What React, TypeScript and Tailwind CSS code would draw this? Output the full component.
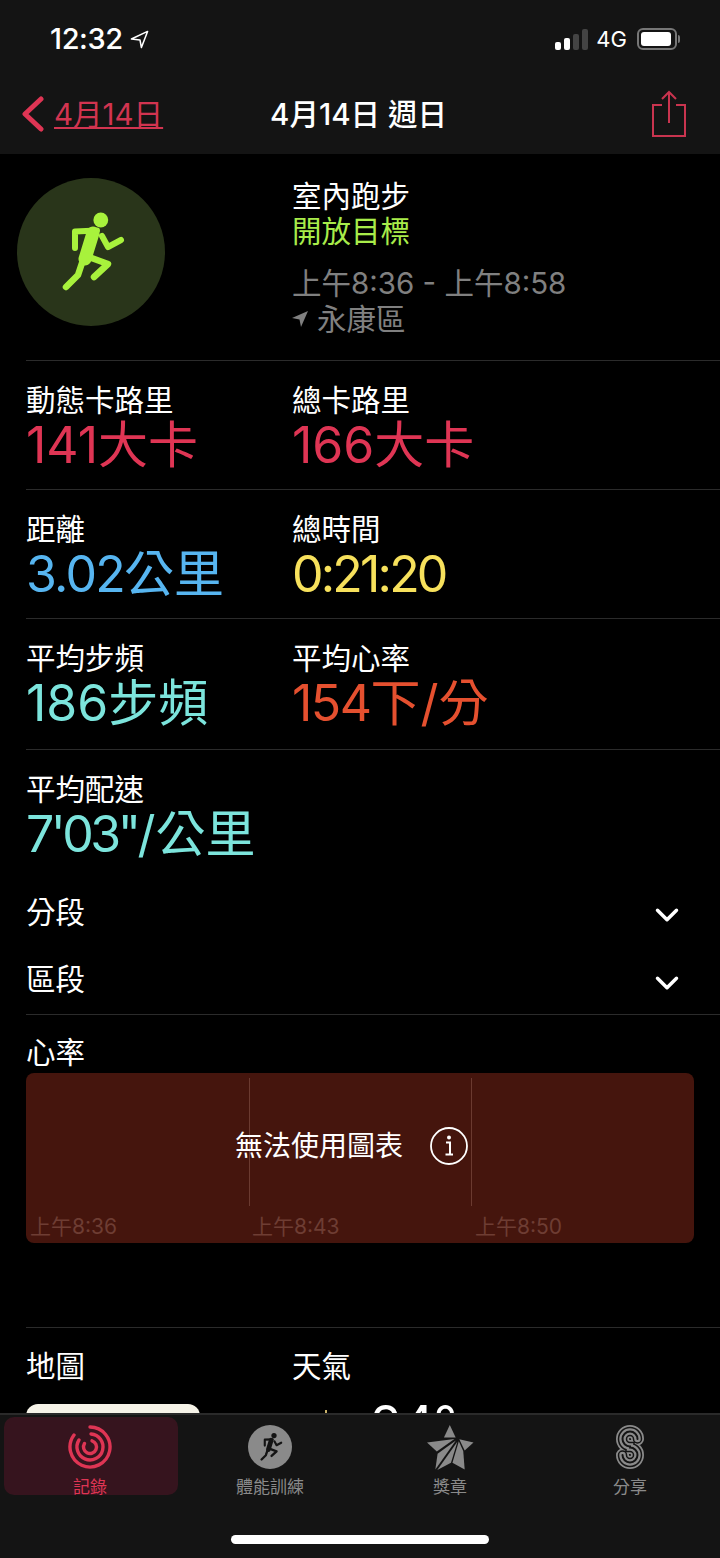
import { ChevronDown } from "lucide-react";

const FONT = "font-['Inter','Noto_Sans_CJK_TC',sans-serif]";

function Runner({ className, color }: { className?: string; color: string }) {
  return (
    <svg viewBox="58 208 68 84" className={className} fill="none">
      <circle cx="101.8" cy="218" r="7.4" fill={color} />
      <path
        d="M76 246 L76 229.5 L98 228.5 M103 234 L109 245 L122 238"
        stroke={color}
        strokeWidth="6"
        strokeLinecap="round"
        strokeLinejoin="round"
      />
      <path d="M94 231 L86 257" stroke={color} strokeWidth="13" strokeLinecap="round" />
      <path
        d="M84 258 L79 273 L67 285 M87 254 L109 262 L95 275"
        stroke={color}
        strokeWidth="6.5"
        strokeLinecap="round"
        strokeLinejoin="round"
      />
    </svg>
  );
}

function Metric({
  label,
  num,
  unit,
  color,
  track = "",
}: {
  label: string;
  num: string;
  unit?: string;
  color: string;
  track?: string;
}) {
  return (
    <div>
      <div className="text-[29.5px] leading-[34px] text-white">{label}</div>
      <div className={`mt-[3px] text-[50px] leading-[50px] ${color}`}>
        <span className={track}>{num}</span>
        {unit}
      </div>
    </div>
  );
}

function MetricRow({ height, children }: { height: string; children: React.ReactNode }) {
  return (
    <div className={`grid grid-cols-[266px_1fr] border-b border-[#2b2b2b] pt-[22px] ${height}`}>
      {children}
    </div>
  );
}

function TabLabel({ children, active }: { children: string; active?: boolean }) {
  return (
    <span className={`mt-[7px] shrink-0 text-[17px] leading-[22px] ${active ? "text-[#df3554]" : "text-[#8a8a8a]"}`}>
      {children}
    </span>
  );
}

const S_PATH = "M21.5 14 A7.5 7.5 0 1 0 14 21.5 L14 22.5 A7.5 7.5 0 1 1 6.5 30";

export default function App() {
  return (
    <div className={`relative h-[1558px] w-[720px] overflow-hidden bg-black ${FONT}`}>
      {/* status bar + nav */}
      <header className="h-[154px] bg-[#141414] text-white">
        <div className="flex h-[78px] items-start justify-between pt-[23px] pl-[50px] pr-[40px]">
          <div className="flex items-center gap-[7px]">
            <span className="text-[29px] leading-[32px] font-medium tracking-[-0.4px]">12:32</span>
            <svg viewBox="0 0 20 20" className="h-[19px] w-[19px]" fill="none" stroke="white" strokeWidth="1.6" strokeLinejoin="round">
              <path d="M1.5 9.5 L18.5 1.5 L12 18.5 L10.5 10.5 Z" />
            </svg>
          </div>
          <div className="flex items-center pt-[2px]">
            <div className="flex h-[22px] items-end gap-[3px]">
              <div className="h-[8px] w-[6px] rounded-[2px] bg-white" />
              <div className="h-[12px] w-[6px] rounded-[2px] bg-white" />
              <div className="h-[16px] w-[6px] rounded-[2px] bg-[#444]" />
              <div className="h-[21px] w-[6px] rounded-[2px] bg-[#444]" />
            </div>
            <span className="ml-[8px] text-[22px] leading-[28px]">4G</span>
            <div className="ml-[10px] flex h-[22px] w-[40px] items-center rounded-[6px] border-2 border-[#777] p-[2px]">
              <div className="h-full w-[30px] rounded-[3px] bg-white" />
            </div>
            <div className="ml-px h-[8px] w-[2px] rounded-r-sm bg-[#777]" />
          </div>
        </div>
        <div className="grid h-[76px] grid-cols-[1fr_auto_1fr] items-center pb-[4px] pl-[22px] pr-[34px]">
          <div className="flex items-center">
            <svg viewBox="0 0 22 36" className="h-[36px] w-[22px]" fill="none" stroke="#df3554" strokeWidth="5" strokeLinecap="round" strokeLinejoin="round">
              <path d="M19 3 L3 18 L19 33" />
            </svg>
            <span className="ml-[10px] text-[29.5px] leading-[34px] text-[#d23450] underline decoration-2 underline-offset-2">
              4月14日
            </span>
          </div>
          <div className="ml-[9px] text-[29.5px] leading-[34px] font-medium">4月14日 週日</div>
          <svg viewBox="0 0 34 48" className="h-[48px] w-[34px] justify-self-end" fill="none" stroke="#c9344f" strokeWidth="2">
            <path d="M10 15 H1 V46 H33 V15 H24" />
            <path d="M17 33 V2 M10 9 L17 2 L24 9" />
          </svg>
        </div>
      </header>

      <main className="pl-[26px]">
        {/* workout summary */}
        <div className="relative -ml-[26px] grid h-[207px] grid-cols-[266px_1fr] pl-[26px]">
          <div className="-ml-[9px] pt-[24px]">
            <div className="flex h-[148px] w-[148px] items-center justify-center rounded-full bg-[#29351a]">
              <Runner className="h-[84px] w-[68px]" color="#a8f23c" />
            </div>
          </div>
          <div className="pt-[24px] text-[29.5px]">
            <div className="leading-[36px] text-white">室內跑步</div>
            <div className="-mt-px leading-[36px] text-[#a8ec4a]">開放目標</div>
            <div className="mt-[16px] leading-[36px] text-[#808080]">上午8:36 - 上午8:58</div>
            <div className="flex items-center leading-[36px] text-[#808080]">
              <svg viewBox="0 0 16 16" className="mr-[9px] h-[16px] w-[16px]" fill="#808080">
                <path d="M0 7 L16 0 L9 16 L7.5 8.5 Z" />
              </svg>
              永康區
            </div>
          </div>
          <div className="absolute bottom-0 left-[26px] right-0 h-px bg-[#2b2b2b]" />
        </div>

        <MetricRow height="h-[129px]">
          <Metric label="動態卡路里" num="141" unit="大卡" color="text-[#df3554]" />
          <Metric label="總卡路里" num="166" unit="大卡" color="text-[#df3554]" />
        </MetricRow>
        <MetricRow height="h-[129px]">
          <Metric label="距離" num="3.02" unit="公里" color="text-[#57b5f0]" track="tracking-[-1.75px]" />
          <Metric label="總時間" num="0:21:20" color="text-[#f7e15c]" track="tracking-[-2.8px]" />
        </MetricRow>
        <MetricRow height="h-[131px]">
          <Metric label="平均步頻" num="186" unit="步頻" color="text-[#7ce4dc]" />
          <Metric label="平均心率" num="154" unit="下/分" color="text-[#e5502f]" track="tracking-[-1.5px]" />
        </MetricRow>
        <div className="h-[129px] pt-[22px]">
          <Metric label="平均配速" num={"7'03\""} unit="/公里" color="text-[#7ce4dc]" track="tracking-[-3.5px]" />
        </div>

        {/* expandable sections */}
        <div className="border-b border-[#2b2b2b]">
          <div className="flex h-[66px] items-center justify-between pr-[34px] text-[29.5px] text-white">
            分段
            <ChevronDown className="mt-[6px] h-[38px] w-[38px]" strokeWidth={2.2} />
          </div>
          <div className="flex h-[69px] items-center justify-between pr-[34px] text-[29.5px] text-white">
            區段
            <ChevronDown className="mt-[6px] h-[38px] w-[38px]" strokeWidth={2.2} />
          </div>
        </div>

        {/* heart rate */}
        <div className="h-[313px] border-b border-[#2b2b2b] pt-[20px]">
          <div className="text-[29.5px] leading-[34px] text-white">心率</div>
          <div className="relative mt-[4px] grid h-[170px] w-[668px] grid-cols-3 rounded-[8px] bg-[#45150d]">
            <div className="h-[133px]" />
            <div className="mt-[5px] h-[128px] border-l border-[#6b3a30]" />
            <div className="mt-[5px] h-[128px] border-l border-[#6b3a30]" />
            <span className="absolute bottom-[3px] left-[4px] text-[21px] leading-[26px] text-[#6e3d33]">上午8:36</span>
            <span className="absolute bottom-[3px] left-[226px] text-[21px] leading-[26px] text-[#6e3d33]">上午8:43</span>
            <span className="absolute bottom-[3px] left-[449px] text-[21px] leading-[26px] text-[#6e3d33]">上午8:50</span>
            <div className="absolute left-[209px] top-[54px] flex items-center gap-[27px] text-white">
              <span className="text-[28px] leading-[38px]">無法使用圖表</span>
              <svg viewBox="0 0 38 38" className="h-[38px] w-[38px]" fill="none">
                <circle cx="19" cy="19" r="18" stroke="white" strokeWidth="1.8" />
                <circle cx="19" cy="10.5" r="2" fill="white" />
                <path d="M16 15.5 H20 V27 M15.5 27.5 H23" stroke="white" strokeWidth="2" />
              </svg>
            </div>
          </div>
        </div>

        {/* map + weather, cut off by the tab bar */}
        <div className="grid grid-cols-[266px_1fr] pt-[21px]">
          <div>
            <div className="text-[29.5px] leading-[34px] text-white">地圖</div>
            <div className="mt-[21px] h-[120px] w-[174px] rounded-t-[12px] bg-[#f6f3e8]" />
          </div>
          <div>
            <div className="text-[29.5px] leading-[34px] text-white">天氣</div>
            <div className="flex items-start">
              <div className="ml-[33px] mt-[27px] h-[20px] w-[2px] bg-[#c9b26a]" />
              <div className="ml-[43px] mt-[12px] text-[52px] leading-[60px] text-white">24°</div>
            </div>
          </div>
        </div>
      </main>

      {/* tab bar */}
      <nav className="absolute bottom-0 left-0 h-[145px] w-full border-t-2 border-[#2a2a2a] bg-[#141414]">
        <div className="grid grid-cols-4 pt-[2px]">
          <div className="ml-[4px] flex h-[78px] w-[174px] flex-col items-center rounded-[10px] bg-[#36141e] pr-[2px] pt-[8px]">
            <svg viewBox="0 0 44 44" className="h-[44px] w-[44px] shrink-0" fill="none" stroke="#df3554" strokeWidth="3.4" strokeLinecap="round">
              <path d="M22 2 A20 20 0 1 1 6 10" />
              <path d="M23 9 A13 13 0 1 1 11 15" />
              <path d="M24 15.8 A6.5 6.5 0 1 1 16.5 18.5" />
            </svg>
            <TabLabel active>記錄</TabLabel>
          </div>
          <div className="flex flex-col items-center pt-[8px]">
            <div className="flex h-[44px] w-[44px] items-center justify-center rounded-full bg-[#8a8a8a]">
              <Runner className="h-[30px] w-[25px]" color="#141414" />
            </div>
            <TabLabel>體能訓練</TabLabel>
          </div>
          <div className="flex flex-col items-center pt-[8px]">
            <svg viewBox="0 0 48 46" className="-mb-px h-[45px] w-[47px] shrink-0" fill="#8a8a8a">
              <path d="M23.3 0 L29.3 12.7 L17.3 12.7 Z" />
              <path d="M0 18 L28 14.2 L10 27 Z" />
              <path d="M29.5 15.8 L10.8 29.5 L8.5 45.5 Z" />
              <path d="M31 17 L10.5 46 L24.5 38.5 Z" />
              <path d="M32.5 16.5 L26 38.5 L38.5 45.5 L37 26.5 Z" />
              <path d="M33 14.5 L47.5 18 L38.5 26 Z" />
            </svg>
            <TabLabel>獎章</TabLabel>
          </div>
          <div className="flex flex-col items-center pt-[8px]">
            <svg viewBox="0 0 28 44" className="h-[44px] w-[28px] shrink-0" fill="none" strokeLinecap="round">
              <path d={S_PATH} stroke="#8a8a8a" strokeWidth="13" />
              <path d={S_PATH} stroke="#141414" strokeWidth="9.5" />
              <path d={S_PATH} stroke="#8a8a8a" strokeWidth="6.5" />
              <path d={S_PATH} stroke="#141414" strokeWidth="2" />
            </svg>
            <TabLabel>分享</TabLabel>
          </div>
        </div>
        <div className="absolute bottom-[14px] left-[231px] h-[9px] w-[258px] rounded-full bg-white" />
      </nav>
    </div>
  );
}
